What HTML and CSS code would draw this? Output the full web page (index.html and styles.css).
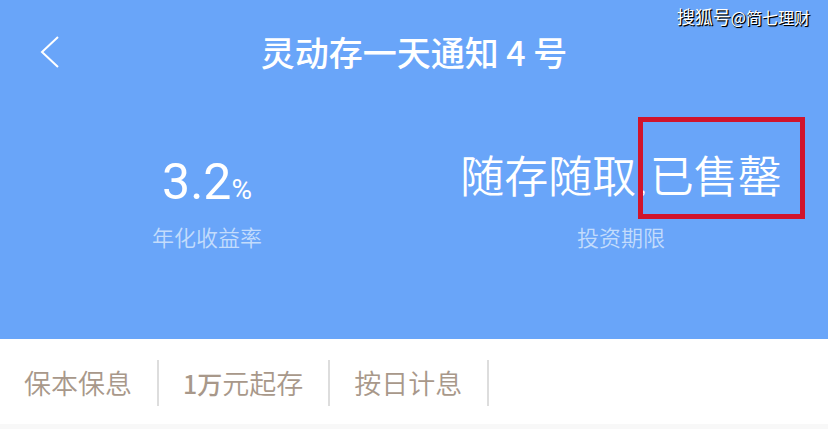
FILE: index.html
```html
<!DOCTYPE html>
<html lang="zh-CN">
<head>
<meta charset="utf-8">
<meta name="viewport" content="width=device-width, initial-scale=1">
<title>灵动存一天通知 4 号</title>
<link rel="stylesheet" href="styles.css">
</head>
<body>
<div class="watermark">搜狐号<span class="watermark-name">@简七理财</span></div>
<section class="hero">
  <header class="navbar">
    <button class="back" type="button" aria-label="返回">
      <svg class="back-icon" viewBox="0 0 20 34" fill="none" stroke="currentColor" stroke-width="2"><path d="M18 2 L2 17 L18 32"/></svg>
    </button>
    <h1 class="title">灵动存一天通知 4 号</h1>
  </header>
  <dl class="stats">
    <div class="stat">
      <dd class="value rate">3.2<span class="unit">%</span></dd>
      <dt class="label">年化收益率</dt>
    </div>
    <div class="stat">
      <dd class="value">随存随取<span class="separator">,</span><span class="marked">已售罄</span></dd>
      <dt class="label">投资期限</dt>
    </div>
  </dl>
</section>
<ul class="tags">
  <li class="tag">保本保息</li>
  <li class="tag"><span class="strong">1万</span>元起存</li>
  <li class="tag">按日计息</li>
</ul>
</body>
</html>
```
FILE: styles.css
```css
* {
  box-sizing: border-box;
}

body {
  margin: 0;
  min-height: 100vh;
  background: #f8f8f8;
  font-family: "Noto Sans CJK SC", sans-serif;
}

.hero {
  padding-bottom: 87px;
  background: #69a5f9;
  color: #fff;
}

.navbar {
  display: grid;
  grid-template-columns: 60px 1fr 60px;
  align-items: center;
  height: 104px;
}

.back {
  display: flex;
  justify-content: flex-end;
  padding: 0;
  border: 0;
  background: none;
  color: inherit;
}

.back-icon {
  width: 20px;
  height: 34px;
}

.title {
  margin: 0;
  font-size: 34px;
  font-weight: 500;
  line-height: 48px;
  text-align: center;
}

.stats {
  display: grid;
  grid-template-columns: 1fr 1fr;
  margin: 0;
  padding-top: 37px;
}

.stat {
  display: flex;
  flex-direction: column;
  align-items: center;
  gap: 13px;
}

.value {
  height: 66px;
  margin: 0;
  font-size: 44px;
  font-weight: 350;
  line-height: 66px;
  white-space: nowrap;
}

.rate {
  padding-top: 8px;
  font-family: Roboto, sans-serif;
  font-size: 50px;
  font-weight: 400;
}

.unit {
  font-size: 28px;
  line-height: 28px;
}

.separator {
  padding: 0 4px;
  font-size: 20px;
  line-height: 20px;
}

.label {
  color: #c3dcfc;
  font-size: 22px;
  font-weight: 350;
  line-height: 32px;
}

.marked {
  position: relative;
}

.marked::after {
  content: "";
  position: absolute;
  inset: -25px -23px -13px -12px;
  border: 5px solid #d0142c;
}

.tags {
  display: flex;
  margin: 0;
  padding: 21px 0 18px;
  background: #fff;
  list-style: none;
}

.tag {
  padding: 0 25px 0 24px;
  border-right: 2px solid #ddd;
  color: #a8988a;
  font-size: 27px;
  font-weight: 350;
  line-height: 46px;
}

.strong {
  font-size: 25px;
  font-weight: 500;
}

.watermark {
  position: absolute;
  top: 4px;
  right: 18px;
  color: #fff;
  font-size: 18px;
  font-weight: 400;
  line-height: 24px;
  text-shadow: 1px 1px 1px #000, 1px 1px 0 #000;
}

.watermark-name {
  font-size: 16px;
}
```
